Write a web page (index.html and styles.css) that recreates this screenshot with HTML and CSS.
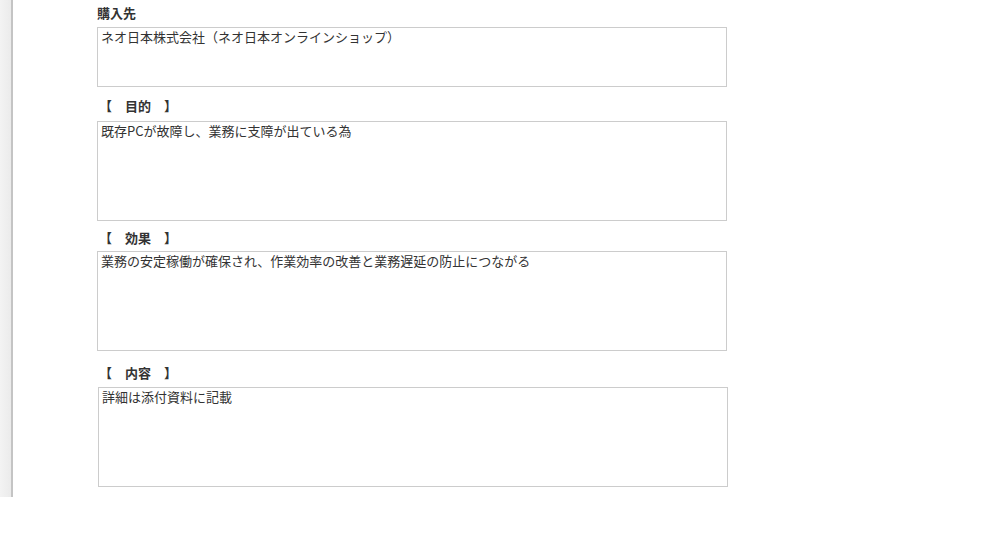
FILE: index.html
```html
<!DOCTYPE html>
<html lang="ja">
<head>
<meta charset="utf-8">
<link rel="stylesheet" href="styles.css">
</head>
<body>
<div class="page">
  <div class="sidebar"></div>
  <div class="main">
    <div class="section s1">
      <div class="label plain">購入先</div>
      <div class="box short">ネオ日本株式会社（ネオ日本オンラインショップ）</div>
    </div>
    <div class="section s2">
      <div class="label">【　目的　】</div>
      <div class="box">既存PCが故障し、業務に支障が出ている為</div>
    </div>
    <div class="section s3">
      <div class="label">【　効果　】</div>
      <div class="box">業務の安定稼働が確保され、作業効率の改善と業務遅延の防止につながる</div>
    </div>
    <div class="section s4">
      <div class="label">【　内容　】</div>
      <div class="box shifted">詳細は添付資料に記載</div>
    </div>
  </div>
</div>
</body>
</html>
```
FILE: styles.css
```css
html, body {
  margin: 0;
  padding: 0;
  background: #ffffff;
}
body {
  font-family: "Noto Sans CJK JP", "Noto Sans", sans-serif;
  font-size: 13px;
  color: #333333;
}
.page {
  display: flex;
  align-items: flex-start;
  width: 1000px;
  height: 550px;
}
.sidebar {
  width: 11px;
  height: 497px;
  background: linear-gradient(to right, #f3f3f3, #ebebeb);
  border-right: 2px solid #c4c4c4;
  flex: none;
}
.main {
  margin-left: 84px;
  display: flex;
  flex-direction: column;
}
.section {
  display: flex;
  flex-direction: column;
}
.label {
  font-weight: bold;
  line-height: 20px;
  height: 20px;
  color: #333333;
  padding-left: 2px;
}
.label.plain {
  padding-left: 0;
}
.s1 { padding-top: 3px; }
.s1 .label { margin-bottom: 4px; }
.s2 { margin-top: 9px; }
.s2 .label { margin-bottom: 5px; }
.s3 { margin-top: 7px; }
.s3 .label { margin-bottom: 3px; }
.s4 { margin-top: 12px; }
.s4 .label { margin-bottom: 4px; }
.box {
  box-sizing: border-box;
  width: 630px;
  height: 100px;
  border: 1px solid #cccccc;
  padding: 0 3px;
  line-height: 18px;
  color: #333333;
}
.box.short {
  height: 60px;
}
.box.shifted {
  margin-left: 1px;
}
```
